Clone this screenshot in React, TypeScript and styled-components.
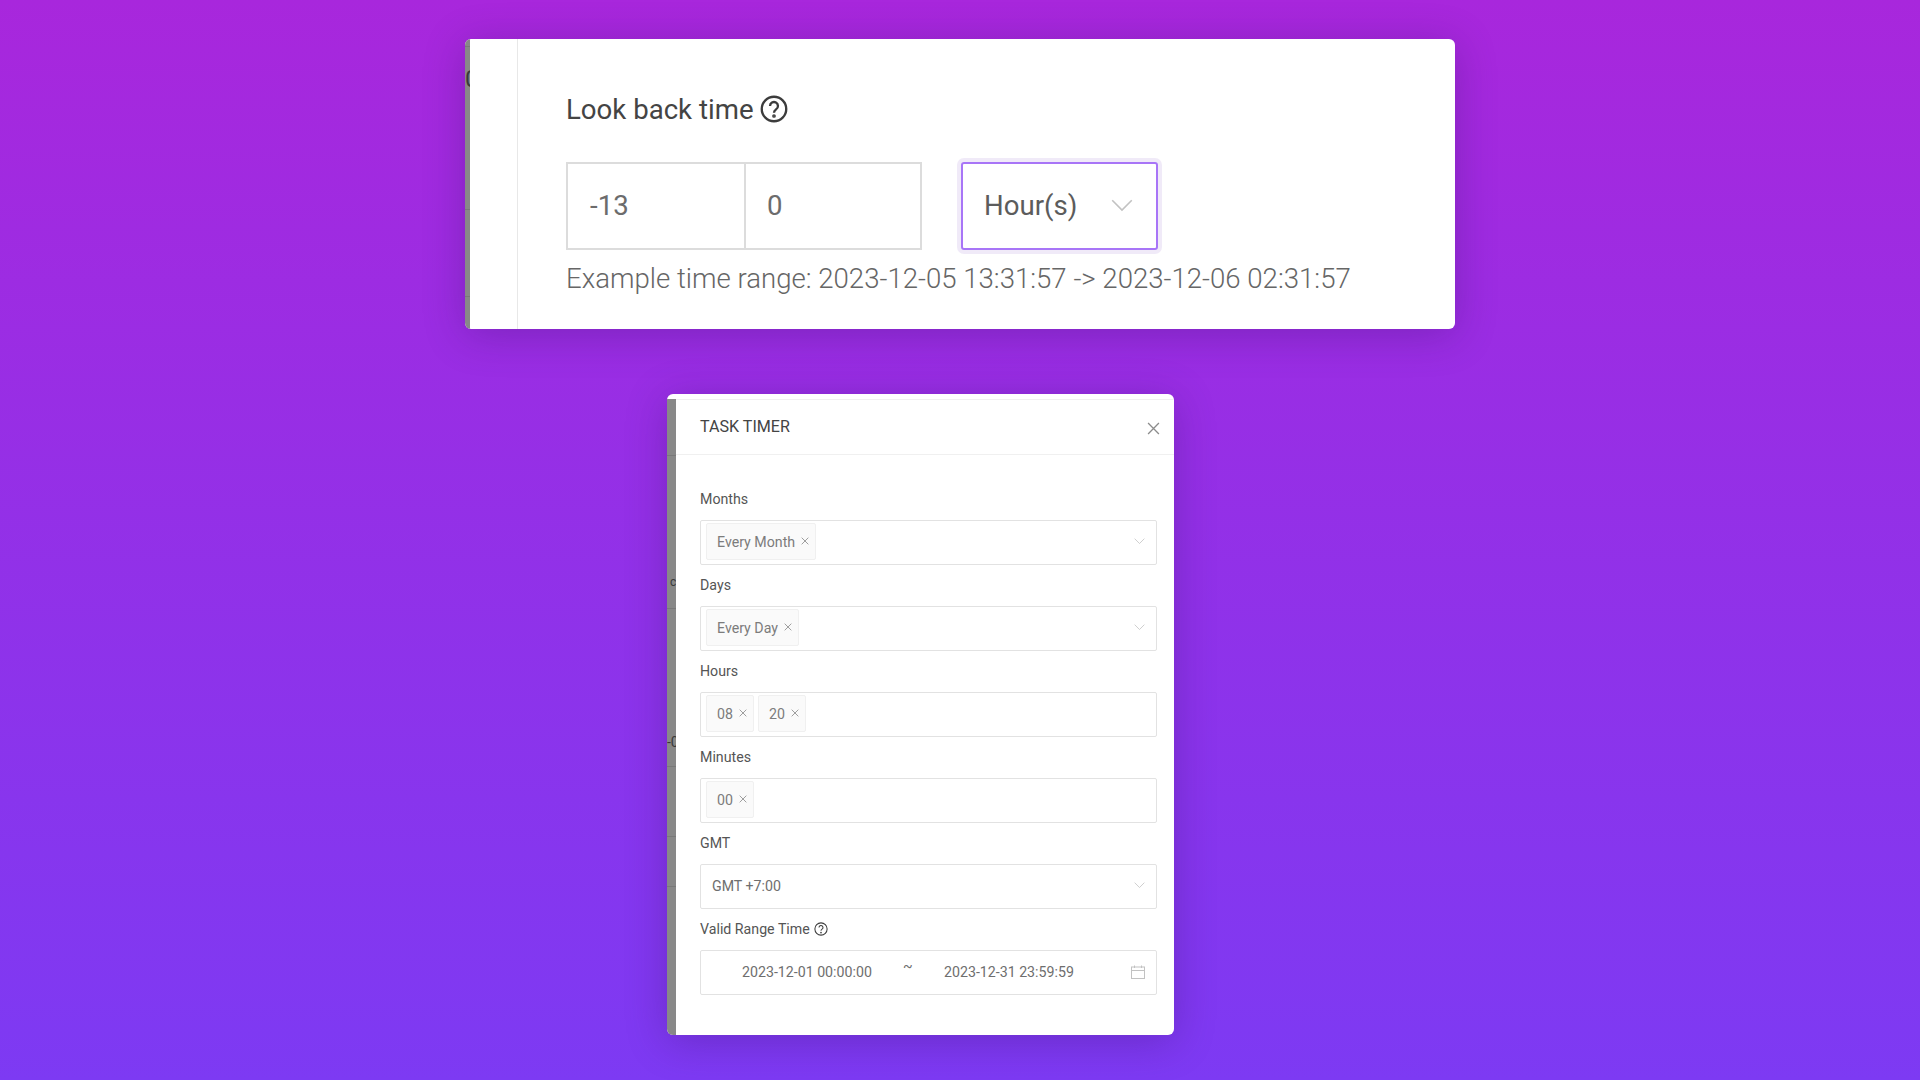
import React from "react";
import styled, { createGlobalStyle } from "styled-components";

const GlobalStyle = createGlobalStyle`
  html, body {
    margin: 0;
    padding: 0;
  }

  body {
    font-family: Roboto, "Liberation Sans", sans-serif;
    color: #595959;
  }
`;

const Page = styled.div`
  width: 1920px;
  height: 1080px;
  overflow: hidden;
  box-sizing: border-box;
  padding-top: 39px;
  background: linear-gradient(180deg, #a827dc 0%, #7d3af3 100%);
`;

const Card = styled.section<{ $left: number; $top?: number; $width: number; $height: number }>`
  display: flex;
  box-sizing: border-box;
  margin-left: ${(p) => p.$left}px;
  margin-top: ${(p) => p.$top ?? 0}px;
  width: ${(p) => p.$width}px;
  height: ${(p) => p.$height}px;
  overflow: hidden;
  background: #fff;
  border-radius: 6px;
  box-shadow: 0 6px 40px rgba(60, 20, 110, 0.32);
`;

const Gutter = styled.div<{ $width: number; $top?: number }>`
  flex: 0 0 ${(p) => p.$width}px;
  margin-top: ${(p) => p.$top ?? 0}px;
  background: #888888;
  overflow: hidden;
`;

const GutterRow = styled.div<{ $height: number; $size?: number; $pad?: number }>`
  box-sizing: border-box;
  height: ${(p) => p.$height}px;
  padding-top: ${(p) => p.$pad ?? 0}px;
  border-bottom: 1px solid #797979;
  overflow: hidden;
  white-space: nowrap;
  font-size: ${(p) => p.$size ?? 12}px;
  line-height: 1.15;
  color: #3a3a3a;
`;

const Rail = styled.div`
  flex: 0 0 47px;
  border-right: 1px solid #e8e8e8;
`;

const LookBack = styled.div`
  padding: 52px 0 0 48px;
`;

const LookBackTitle = styled.h2`
  display: flex;
  align-items: center;
  gap: 6px;
  margin: 0;
  height: 36px;
  font-size: 27.6px;
  font-weight: 400;
  color: #444;
`;

const LookBackRow = styled.div`
  display: flex;
  gap: 39px;
  margin-top: 35px;
`;

const NumberGroup = styled.div`
  display: flex;
  box-sizing: border-box;
  width: 356px;
  height: 88px;
  border: 2px solid #dcdcdc;
`;

const NumberCell = styled.div<{ $width: number }>`
  box-sizing: border-box;
  width: ${(p) => p.$width}px;
  display: flex;
  align-items: center;
  padding-left: 22px;
  padding-bottom: 1px;
  font-size: 27.6px;
  color: #6c6c6c;

  & + & {
    border-left: 2px solid #dcdcdc;
    padding-left: 21px;
  }
`;

const UnitSelect = styled.div`
  box-sizing: border-box;
  width: 197px;
  height: 88px;
  display: flex;
  align-items: center;
  justify-content: space-between;
  padding: 0 23px 1px 21px;
  border: 2px solid #a875f7;
  border-radius: 3px;
  box-shadow: 0 0 0 4px rgba(130, 80, 200, 0.12);
  font-size: 27.6px;
  color: #5c5c5c;
`;

const RangeNote = styled.p`
  margin: 7px 0 0;
  font-size: 27.6px;
  line-height: 44px;
  font-weight: 300;
  color: #666;
  white-space: nowrap;
`;

const Dialog = styled.div`
  flex: 1;
  min-width: 0;
  display: flex;
  flex-direction: column;
`;

const DialogHeader = styled.header`
  box-sizing: border-box;
  height: 56px;
  margin-top: 5px;
  display: flex;
  align-items: center;
  justify-content: space-between;
  padding: 0 14px 0 24px;
  border-top: 1px solid #f0f0f0;
  border-bottom: 1px solid #f0f0f0;
`;

const DialogTitle = styled.h3`
  margin: 0 0 2px;
  font-size: 16.1px;
  font-weight: 400;
  color: #444;
`;

const CloseButton = styled.button`
  display: flex;
  padding: 0;
  margin-top: 2px;
  border: 0;
  background: none;
  color: #8c8c8c;
`;

const DialogBody = styled.div`
  display: flex;
  flex-direction: column;
  padding: 34px 17px 0 24px;
`;

const FieldLabel = styled.label`
  display: flex;
  align-items: center;
  gap: 4px;
  height: 20px;
  margin-bottom: 11px;
  font-size: 14.2px;
  color: #555;
`;

const Field = styled.div`
  margin-bottom: 10px;
`;

const Control = styled.div`
  box-sizing: border-box;
  height: 45px;
  display: flex;
  align-items: center;
  gap: 4px;
  padding: 0 11px 2px 5px;
  border: 1px solid #e2e2e2;
  border-radius: 2px;
  font-size: 14.2px;
  color: #6e6e6e;
`;

const Tag = styled.span`
  box-sizing: border-box;
  height: 37px;
  display: inline-flex;
  align-items: center;
  gap: 6px;
  padding: 0 6px 0 10px;
  background: #fafafa;
  border: 1px solid #f0f0f0;
  border-radius: 2px;
  color: #7c7c7c;

  svg {
    margin-top: -2px;
  }
`;

const Trailing = styled.span`
  margin-left: auto;
  display: flex;
  color: #c2c2c2;
`;

const PlainValue = styled.span`
  padding-left: 6px;
`;

const RangeStart = styled.span`
  margin-left: 36px;
  width: 157px;
`;

const RangeTilde = styled.span`
  width: 37px;
  margin-top: -12px;
`;

const Chevron = ({ size }: { size: number }) => (
  <svg width={size} height={size * 0.56} viewBox="0 0 18 10" fill="none" stroke="currentColor" strokeWidth="1.3">
    <path d="M1 1l8 8 8-8" />
  </svg>
);

const Cross = ({ size, weight = 1.2 }: { size: number; weight?: number }) => (
  <svg width={size} height={size} viewBox="0 0 12 12" fill="none" stroke="currentColor" strokeWidth={weight}>
    <path d="M1 1l10 10M11 1L1 11" />
  </svg>
);

const Help = ({ size, weight }: { size: number; weight: number }) => (
  <svg width={size} height={size} viewBox="0 0 24 24" fill="none" stroke="#3c3c3c" strokeWidth={weight}>
    <circle cx="12" cy="12" r="10.5" />
    <path d="M8.6 9.4a3.4 3.4 0 1 1 5.2 2.9c-1.2.8-1.8 1.4-1.8 2.9" />
    <circle cx="12" cy="18" r="0.6" fill="#3c3c3c" />
  </svg>
);

const Calendar = () => (
  <svg width="14" height="14" viewBox="0 0 14 14" fill="none" stroke="currentColor" strokeWidth="1">
    <rect x="0.5" y="2" width="13" height="11.5" />
    <path d="M0.5 5.5h13M3.5 0.5v2.5M10.5 0.5v2.5" />
  </svg>
);

const fields = [
  { label: "Months", tags: ["Every Month"], arrow: true },
  { label: "Days", tags: ["Every Day"], arrow: true },
  { label: "Hours", tags: ["08", "20"], arrow: false },
  { label: "Minutes", tags: ["00"], arrow: false },
];

export default function App() {
  return (
    <Page>
      <GlobalStyle />
      <Card $left={465} $width={990} $height={290}>
        <Gutter $width={5}>
          <GutterRow $height={8} />
          <GutterRow $height={163} $size={24} $pad={19}>
            0
          </GutterRow>
          <GutterRow $height={87} />
        </Gutter>
        <Rail />
        <LookBack>
          <LookBackTitle>
            Look back time
            <Help size={28} weight={2} />
          </LookBackTitle>
          <LookBackRow>
            <NumberGroup>
              <NumberCell $width={176}>-13</NumberCell>
              <NumberCell $width={176}>0</NumberCell>
            </NumberGroup>
            <UnitSelect>
              Hour(s)
              <Trailing>
                <Chevron size={22} />
              </Trailing>
            </UnitSelect>
          </LookBackRow>
          <RangeNote>Example time range: 2023-12-05 13:31:57 -&gt; 2023-12-06 02:31:57</RangeNote>
        </LookBack>
      </Card>

      <Card $left={667} $top={65} $width={507} $height={641}>
        <Gutter $width={9} $top={5}>
          <GutterRow $height={57} />
          <GutterRow $height={153} $pad={120}>
            &nbsp;c
          </GutterRow>
          <GutterRow $height={158} $size={14} $pad={125}>
            -0
          </GutterRow>
          <GutterRow $height={70} />
          <GutterRow $height={50} />
        </Gutter>
        <Dialog>
          <DialogHeader>
            <DialogTitle>TASK TIMER</DialogTitle>
            <CloseButton>
              <Cross size={13} />
            </CloseButton>
          </DialogHeader>
          <DialogBody>
            {fields.map((field) => (
              <Field key={field.label}>
                <FieldLabel>{field.label}</FieldLabel>
                <Control>
                  {field.tags.map((tag) => (
                    <Tag key={tag}>
                      {tag}
                      <Cross size={8} weight={1.1} />
                    </Tag>
                  ))}
                  {field.arrow && (
                    <Trailing>
                      <Chevron size={11} />
                    </Trailing>
                  )}
                </Control>
              </Field>
            ))}
            <Field>
              <FieldLabel>GMT</FieldLabel>
              <Control>
                <PlainValue>GMT +7:00</PlainValue>
                <Trailing>
                  <Chevron size={11} />
                </Trailing>
              </Control>
            </Field>
            <Field>
              <FieldLabel>
                Valid Range Time
                <Help size={14} weight={1.8} />
              </FieldLabel>
              <Control>
                <RangeStart>2023-12-01 00:00:00</RangeStart>
                <RangeTilde>~</RangeTilde>
                <span>2023-12-31 23:59:59</span>
                <Trailing>
                  <Calendar />
                </Trailing>
              </Control>
            </Field>
          </DialogBody>
        </Dialog>
      </Card>
    </Page>
  );
}
